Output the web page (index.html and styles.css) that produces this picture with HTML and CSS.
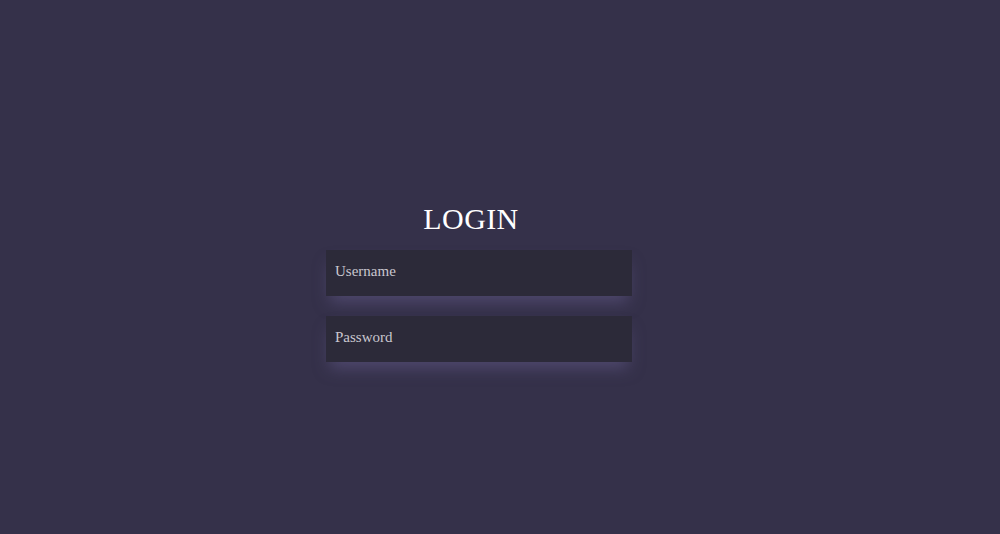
FILE: index.html
```html
<!DOCTYPE html>
<html>
<head>
<meta charset="utf-8">
<link rel="stylesheet" href="styles.css">
</head>
<body>
<main class="page">
  <form class="login">
    <h1 class="title">LOGIN</h1>
    <input class="field" type="text" placeholder="Username">
    <input class="field" type="password" placeholder="Password">
  </form>
</main>
</body>
</html>
```
FILE: styles.css
```css
html, body {
  margin: 0;
  padding: 0;
  height: 100%;
  background: #35314a;
}
.page {
  height: 534px;
  display: flex;
  justify-content: center;
  padding-top: 202px;
  padding-right: 42px;
  box-sizing: border-box;
}
.login {
  width: 306px;
  display: flex;
  flex-direction: column;
  align-items: center;
  gap: 20px;
}
.title {
  margin: 0 16px -6px 0;
  font-family: "Liberation Serif", "Times New Roman", serif;
  font-weight: normal;
  font-size: 30px;
  line-height: 34px;
  color: #ffffff;
  letter-spacing: 0.4px;
}
.field {
  width: 306px;
  height: 46px;
  box-sizing: border-box;
  border: none;
  outline: none;
  background: #2c2a39;
  padding: 0 9px 4px;
  font-family: "Liberation Serif", "Times New Roman", serif;
  font-size: 15px;
  color: #d0cfd6;
  box-shadow: 0 10px 16px -4px rgba(105, 96, 145, 0.5);
}
.field::placeholder {
  color: #c9c7cf;
}
```
